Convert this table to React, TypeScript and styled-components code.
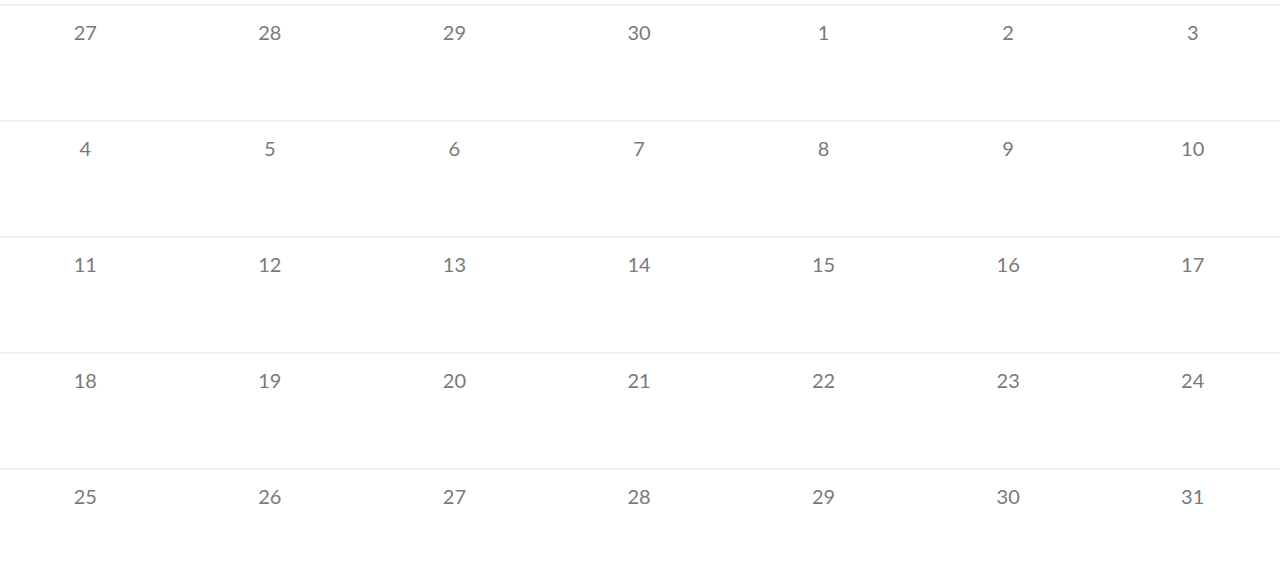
import React from 'react';
import styled, { createGlobalStyle } from 'styled-components';

const GlobalStyle = createGlobalStyle`
  html, body {
    margin: 0;
    padding: 0;
    background: #fff;
    overflow: hidden;
  }
  body {
    font-family: Lato, 'Open Sans', sans-serif;
  }
`;

const Month = styled.div`
  width: 1292px;
  margin: 4px 0 0 -7px;
`;

const Week = styled.div`
  display: grid;
  grid-template-columns: repeat(7, 1fr);
  height: 116px;
  box-sizing: border-box;
  border-top: 2px solid #f1f1f1;
`;

const Day = styled.div`
  padding-top: 14px;
  text-align: center;
  font-size: 20px;
  line-height: 24px;
  color: #7a7a7a;
`;

const weeks: number[][] = [
  [27, 28, 29, 30, 1, 2, 3],
  [4, 5, 6, 7, 8, 9, 10],
  [11, 12, 13, 14, 15, 16, 17],
  [18, 19, 20, 21, 22, 23, 24],
  [25, 26, 27, 28, 29, 30, 31],
];

export default function App() {
  return (
    <>
      <GlobalStyle />
      <Month>
        {weeks.map((week, i) => (
          <Week key={i}>
            {week.map((d, j) => (
              <Day key={j}>{d}</Day>
            ))}
          </Week>
        ))}
      </Month>
    </>
  );
}
